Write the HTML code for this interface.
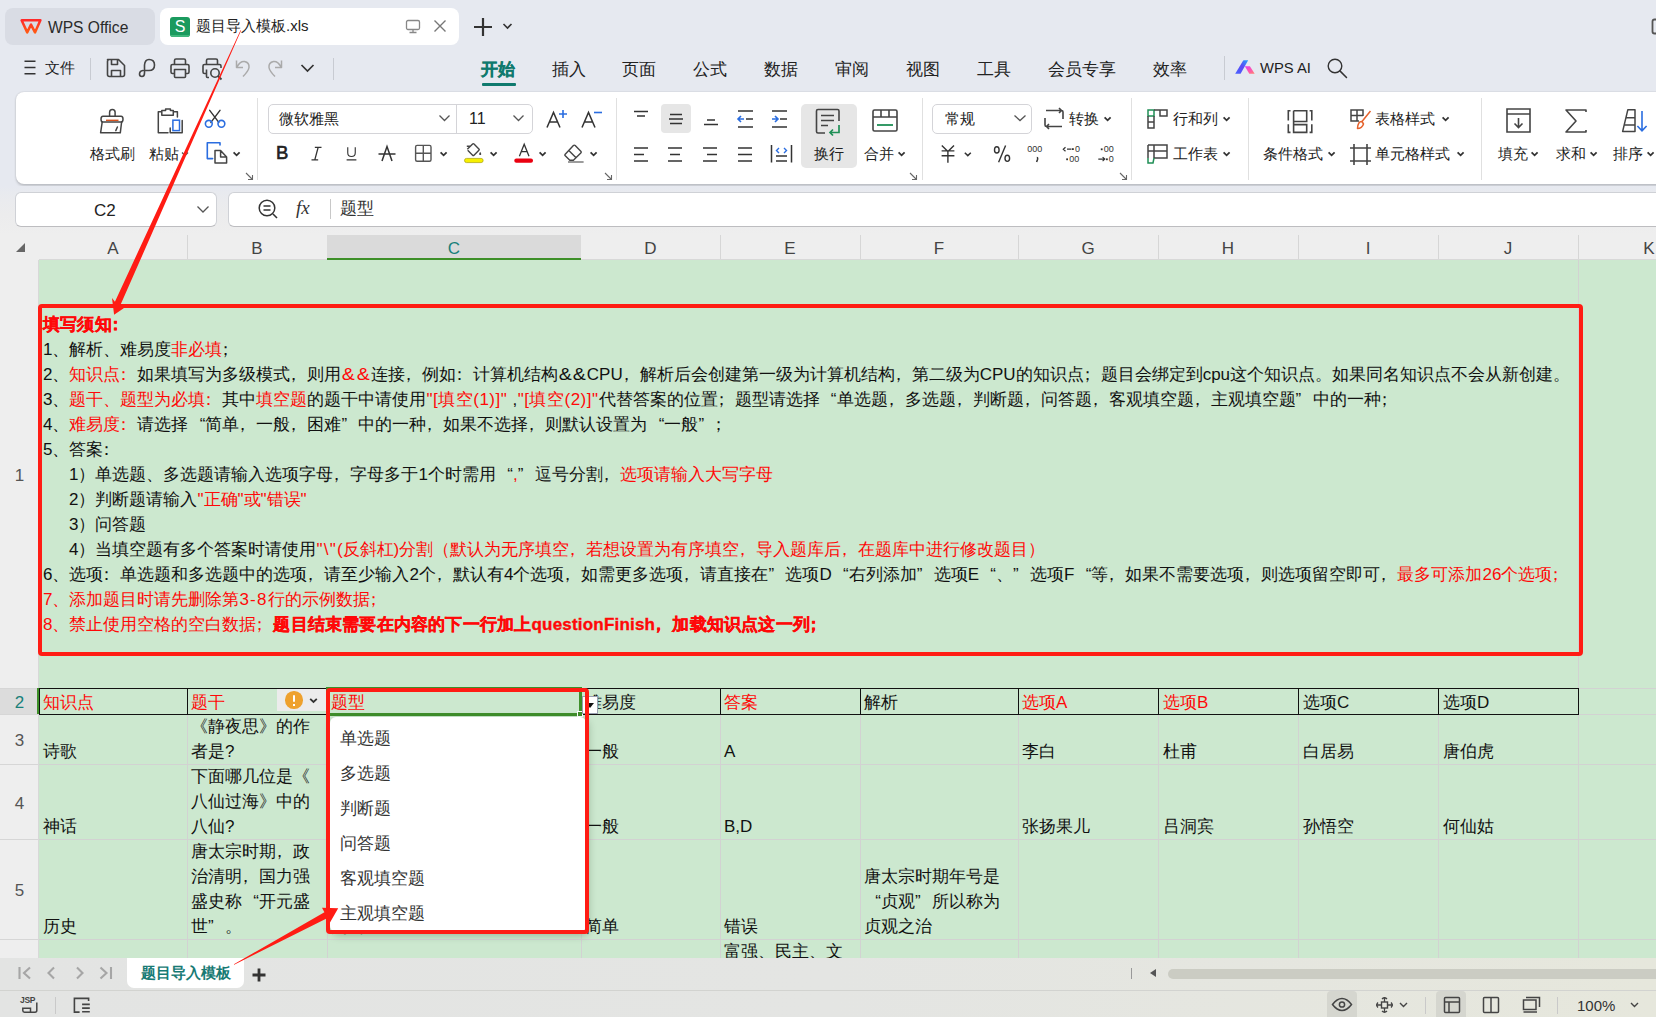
<!DOCTYPE html><html><head><meta charset="utf-8"><style>*{margin:0;padding:0;box-sizing:border-box}
html,body{width:1656px;height:1017px;overflow:hidden}
body{position:relative;background:#e6e9f0;font-family:"Liberation Sans",sans-serif;color:#222}
.a{position:absolute}
.t{position:absolute;white-space:nowrap}
#colhdr{left:0;top:235px;width:1656px;height:25px;background:#eeeeee;overflow:hidden}
#rowhdr{left:0;top:260px;width:39px;height:698px;background:#eeeeee}
#grid{left:39px;top:260px;width:1617px;height:698px;background:#cce8cf;overflow:hidden}
.ch{position:absolute;top:0;height:25px;line-height:27px;text-align:center;font-size:17px;color:#444}
.chs{position:absolute;top:0;width:1px;height:25px;background:#d6d6d6}
.rh{position:absolute;left:0;width:39px;text-align:center;font-size:17px;color:#555;padding-top:2px}
.rhs{position:absolute;left:0;width:39px;height:1px;background:#d6d6d6}
.vl{position:absolute;width:1px;background:#d2d2d2}
.hl{position:absolute;height:1px;background:#d2d2d2}
.c{position:absolute;white-space:nowrap;font-size:17px;line-height:25px;color:#111}
.r{color:#ff0808}
.ql{display:inline-block;width:1em;text-align:right}
.qr{display:inline-block;width:1em;text-align:left}
.pl{position:relative;left:-5px}
.amp{display:inline-block;width:14.6px;text-align:center;transform:scaleX(1.15)}
b{-webkit-text-stroke:0.35px #ff0808;letter-spacing:0.2px}
</style></head><body>
<!-- tab bar -->
<div class="a" style="left:5px;top:8px;width:150px;height:37px;background:#d9dce4;border-radius:8px"></div>
<svg class="a" style="left:0;top:0;overflow:visible" width="1" height="1"><defs><linearGradient id="wg" x1="0" y1="0" x2="0" y2="1"><stop offset="0" stop-color="#ff2a2a"/><stop offset="1" stop-color="#ff5a14"/></linearGradient></defs><path d="M21.6 20.3H40.4L35 32.4L31 24.6L27.2 32.4Z" fill="none" stroke="url(#wg)" stroke-width="2.5" stroke-linejoin="round"/></svg>
<div class="t" style="left:48px;top:18.5px;font-size:15.6px;line-height:18px;color:#2a2a2a">WPS Office</div>
<div class="a" style="left:160px;top:8px;width:299px;height:37px;background:#fff;border-radius:8px"></div>
<div class="a" style="left:170px;top:17px;width:20px;height:20px;background:#1a9a5e;border-radius:3px;overflow:hidden"><div class="a" style="left:0;bottom:0;width:20px;height:2px;background:#3fb67c"></div><div class="t" style="left:0;top:0;width:20px;text-align:center;font-size:16px;line-height:20px;color:#fff">S</div></div>
<div class="t" style="left:196px;top:16px;font-size:15px;line-height:20px;color:#222">题目导入模板.xls</div>
<svg class="a" style="left:405px;top:19px" width="16" height="15" viewBox="0 0 16 15"><rect x="1.5" y="1.5" width="13" height="9" rx="1.5" fill="none" stroke="#888" stroke-width="1.3"/><path d="M8 10.5V13.5M4.5 13.5H11.5" stroke="#888" stroke-width="1.3"/></svg>
<svg class="a" style="left:433px;top:19px" width="14" height="14" viewBox="0 0 14 14"><path d="M1.5 1.5L12.5 12.5M12.5 1.5L1.5 12.5" stroke="#777" stroke-width="1.4"/></svg>
<svg class="a" style="left:473px;top:17px" width="20" height="20" viewBox="0 0 20 20"><path d="M10 1V19M1 10H19" stroke="#333" stroke-width="2.2"/></svg>
<svg class="a" style="left:502px;top:22px" width="11" height="8" viewBox="0 0 11 8"><path d="M1.5 2L5.5 6L9.5 2" fill="none" stroke="#333" stroke-width="1.6"/></svg>
<svg class="a" style="left:1651px;top:18px" width="6" height="17" viewBox="0 0 6 17"><path d="M6 1.5H3.5Q1.5 1.5 1.5 3.5V13.5Q1.5 15.5 3.5 15.5H6" fill="none" stroke="#555" stroke-width="1.8"/></svg>
<!-- menu row -->
<svg class="a" style="left:24px;top:60px" width="12" height="15" viewBox="0 0 12 15"><path d="M0.5 1.2H11.5M0.5 7.5H11.5M0.5 13.8H11.5" stroke="#333" stroke-width="1.5"/></svg>
<div class="t" style="left:45px;top:58px;font-size:15px;line-height:20px;color:#222">文件</div>
<div class="a" style="left:90px;top:58px;width:1px;height:22px;background:#c8cbd2"></div>
<svg class="a" style="left:104px;top:57px" width="24" height="22" viewBox="0 0 24 22"><path d="M3.5 2.5H14.5L20.5 8.5V17.5Q20.5 19.5 18.5 19.5H5.5Q3.5 19.5 3.5 17.5V4.5Q3.5 2.5 5.5 2.5Z M7.5 2.5V7.5H13.5V2.5 M7.5 19.5V13.5H16.5V19.5" fill="none" stroke="#444" stroke-width="1.6" stroke-linejoin="round"/></svg>
<svg class="a" style="left:138px;top:57px" width="20" height="22" viewBox="0 0 20 22"><path d="M7 13.5H11Q16.5 13.5 16.5 8Q16.5 2.5 11 2.5Q7 2.5 6.5 8V16Q6.5 19.5 4 19.5Q1.5 19.5 1.5 17Q1.5 14 5 13.5" fill="none" stroke="#444" stroke-width="1.6" stroke-linecap="round"/></svg>
<svg class="a" style="left:169px;top:57px" width="22" height="22" viewBox="0 0 22 22"><path d="M5.5 7.5V3.5Q5.5 2 7 2H15Q16.5 2 16.5 3.5V7.5 M5.5 16.5H3.5Q2 16.5 2 15V9Q2 7.5 3.5 7.5H18.5Q20 7.5 20 9V15Q20 16.5 18.5 16.5H16.5 M5.5 12.5H16.5V19.5Q16.5 20.5 15.5 20.5H6.5Q5.5 20.5 5.5 19.5Z" fill="none" stroke="#444" stroke-width="1.6" stroke-linejoin="round"/></svg>
<svg class="a" style="left:201px;top:57px" width="24" height="24" viewBox="0 0 24 24"><path d="M5.5 7.5V3.5Q5.5 2 7 2H15Q16.5 2 16.5 3.5V7.5 M5.5 16.5H3.5Q2 16.5 2 15V9Q2 7.5 3.5 7.5H18.5Q20 7.5 20 9V11 M5.5 12.5V19.5Q5.5 20.5 6.5 20.5H8" fill="none" stroke="#444" stroke-width="1.6" stroke-linejoin="round"/><circle cx="14" cy="16" r="4.2" fill="none" stroke="#444" stroke-width="1.6"/><path d="M17 19L20.5 22.5" stroke="#444" stroke-width="1.8"/></svg>
<svg class="a" style="left:234px;top:58px" width="18" height="20" viewBox="0 0 18 20"><path d="M3 9Q6 3 10.5 3.5Q15.5 4.5 15 9.5Q14.5 13 9 18.5 M2.5 2.5V9.5H9" fill="none" stroke="#aaa" stroke-width="1.5" stroke-linejoin="round"/></svg>
<svg class="a" style="left:266px;top:58px" width="18" height="20" viewBox="0 0 18 20"><path d="M15 9Q12 3 7.5 3.5Q2.5 4.5 3 9.5Q3.5 13 9 18.5 M15.5 2.5V9.5H9" fill="none" stroke="#aaa" stroke-width="1.5" stroke-linejoin="round"/></svg>
<svg class="a" style="left:300px;top:63px" width="15" height="10" viewBox="0 0 15 10"><path d="M1.5 2L7.5 8L13.5 2" fill="none" stroke="#333" stroke-width="1.7"/></svg>
<div class="a" style="left:333px;top:58px;width:1px;height:22px;background:#c8cbd2"></div>
<div class="t" style="left:481px;top:60px;font-size:17px;line-height:20px;color:#0f7a6e;font-weight:bold;-webkit-text-stroke:0.3px #0f7a6e">开始</div>
<div class="a" style="left:482px;top:83px;width:34px;height:2.5px;border-radius:1px;background:#0f7a6e"></div>
<div class="t" style="left:552px;top:60px;font-size:17px;line-height:20px;color:#222">插入</div>
<div class="t" style="left:622px;top:60px;font-size:17px;line-height:20px;color:#222">页面</div>
<div class="t" style="left:693px;top:60px;font-size:17px;line-height:20px;color:#222">公式</div>
<div class="t" style="left:764px;top:60px;font-size:17px;line-height:20px;color:#222">数据</div>
<div class="t" style="left:835px;top:60px;font-size:17px;line-height:20px;color:#222">审阅</div>
<div class="t" style="left:906px;top:60px;font-size:17px;line-height:20px;color:#222">视图</div>
<div class="t" style="left:977px;top:60px;font-size:17px;line-height:20px;color:#222">工具</div>
<div class="t" style="left:1048px;top:60px;font-size:17px;line-height:20px;color:#222">会员专享</div>
<div class="t" style="left:1153px;top:60px;font-size:17px;line-height:20px;color:#222">效率</div>
<div class="a" style="left:1224px;top:56px;width:1px;height:24px;background:#c8cbd2"></div>
<svg class="a" style="left:0;top:0;overflow:visible" width="1" height="1"><defs><linearGradient id="aiL" x1="0" y1="1" x2="1" y2="0"><stop offset="0" stop-color="#4a63ff"/><stop offset="0.55" stop-color="#5a4af5"/><stop offset="1" stop-color="#22a8ff"/></linearGradient><linearGradient id="aiR" x1="0" y1="0" x2="1" y2="1"><stop offset="0" stop-color="#e23cf0"/><stop offset="0.6" stop-color="#ff5aa8"/><stop offset="1" stop-color="#ff8a6a"/></linearGradient></defs><path d="M1235.2 73.8L1243.2 60.6Q1243.6 60.2 1244.2 60.2H1248.2L1240.6 73.8Z" fill="url(#aiL)"/><path d="M1244.8 66.3H1249.9L1254.7 73.8H1249.3Z" fill="url(#aiR)"/></svg>
<div class="t" style="left:1260px;top:58.2px;font-size:14.8px;line-height:20px;color:#1e1e1e">WPS AI</div>
<svg class="a" style="left:1327px;top:58px" width="22" height="22" viewBox="0 0 22 22"><circle cx="8" cy="8" r="6.8" fill="none" stroke="#333" stroke-width="1.4"/><path d="M12.9 12.9L19.5 19.5" stroke="#333" stroke-width="1.5" stroke-linecap="round"/></svg>

<div class="a" style="left:16px;top:91.5px;width:1660px;height:92.3px;background:#fff;border-radius:8px;box-shadow:0 0 2px rgba(0,0,0,0.12),0 1.5px 2.5px rgba(0,0,0,0.16)"></div>
<!-- clipboard group -->
<svg class="a" style="left:0;top:0;overflow:visible" width="1" height="1">
<g fill="none" stroke="#444" stroke-width="1.5" stroke-linejoin="round" stroke-linecap="round">
<path d="M109.6 116.3V112.2A2.75 2.75 0 0 1 115.1 112.2V116.3"/>
<path d="M103 116.3H121Q123 116.3 123 119.15Q123 122 121 122H103Q101 122 101 119.15Q101 116.3 103 116.3Z"/>
<path d="M102.2 122L100.6 132.8H120.3L121.6 122"/>
<path d="M117.4 127L115.8 130.6"/>
<path d="M161.2 111.8H158.3V132.8H168"/>
<path d="M161.8 115.2V110.6H165.6V109H170.4V110.6H173.3V115.2Z"/>
<path d="M173.6 111.8H177.4V117"/>
<path d="M170.2 128V132.8H182.2V120.5"/>
<path d="M209.7 110.3L218.8 122.4M220 110.3L210.9 122.4" stroke="#333" stroke-width="1.4"/>
<path d="M220 145V142.8H207.3V158.6H212.6" stroke="#2a6de0" stroke-width="1.6"/>
<path d="M215 150.4H220.6L226.6 157V163H215Z M220.6 150.4V157H226.6"/>
</g>
<rect x="172.9" y="120.2" width="6.6" height="10.4" fill="none" stroke="#2a6de0" stroke-width="1.5"/>
<path d="M106 120.3H118.5" stroke="#d9531e" stroke-width="1.4"/>
<circle cx="208.8" cy="123.8" r="3.4" fill="none" stroke="#2a6de0" stroke-width="1.6"/>
<circle cx="221.4" cy="123.8" r="3.4" fill="none" stroke="#2a6de0" stroke-width="1.6"/>
</svg>
<div class="t" style="left:90px;top:144px;font-size:15px;line-height:20px;color:#222">格式刷</div>
<div class="t" style="left:149px;top:144px;font-size:15px;line-height:20px;color:#222">粘贴</div>
<svg class="a" style="left:181px;top:151px" width="8" height="6" viewBox="0 0 8 6"><path d="M1 1.5L4 4.5L7 1.5" fill="none" stroke="#555" stroke-width="1.3"/></svg>
<svg class="a" style="left:232px;top:151px" width="9" height="6" viewBox="0 0 9 6"><path d="M1.6 1.4L4.6 4.3L7.6 1.4" fill="none" stroke="#333" stroke-width="1.8"/></svg>
<svg class="a" style="left:245px;top:172px" width="9" height="9" viewBox="0 0 9 9"><path d="M1 1L7.5 7.5M7.5 3V7.5H3" fill="none" stroke="#666" stroke-width="1.1"/></svg>
<div class="a" style="left:257px;top:98px;width:1px;height:82px;background:#e0e0e0"></div>
<!-- font group -->
<div class="a" style="left:268px;top:104px;width:265px;height:30px;border:1px solid #d4d4d8;border-radius:5px"></div>
<div class="a" style="left:456px;top:105px;width:1px;height:28px;background:#d4d4d8"></div>
<div class="t" style="left:279px;top:109px;font-size:15px;line-height:20px;color:#222">微软雅黑</div>
<svg class="a" style="left:438px;top:114px" width="13" height="8" viewBox="0 0 13 8"><path d="M1.5 1.5L6.5 6.5L11.5 1.5" fill="none" stroke="#555" stroke-width="1.3"/></svg>
<div class="t" style="left:469px;top:109px;font-size:16px;line-height:20px;color:#222">11</div>
<svg class="a" style="left:512px;top:114px" width="13" height="8" viewBox="0 0 13 8"><path d="M1.5 1.5L6.5 6.5L11.5 1.5" fill="none" stroke="#555" stroke-width="1.3"/></svg>
<svg class="a" style="left:545px;top:108px" width="24" height="22" viewBox="0 0 24 22"><path d="M2 19.5L8.5 4.5L15 19.5M4.5 14H12.5" fill="none" stroke="#333" stroke-width="1.5"/><path d="M18 2V10M14 6H22" stroke="#2a6de0" stroke-width="1.6"/></svg>
<svg class="a" style="left:580px;top:108px" width="24" height="22" viewBox="0 0 24 22"><path d="M2 19.5L8.5 4.5L15 19.5M4.5 14H12.5" fill="none" stroke="#333" stroke-width="1.5"/><path d="M14 4.5H22" stroke="#2a6de0" stroke-width="1.6"/></svg>
<div class="t" style="left:276px;top:142px;font-size:18.5px;line-height:22px;color:#222;-webkit-text-stroke:0.6px #222">B</div>
<svg class="a" style="left:309px;top:146px" width="15" height="15" viewBox="0 0 16 18"><path d="M6 1.5H14M2 16.5H10M10 1.5L6 16.5" fill="none" stroke="#333" stroke-width="1.5"/></svg>
<svg class="a" style="left:344px;top:146px" width="15" height="15" viewBox="0 0 17 20"><path d="M3.5 1.5V9Q3.5 14 8.5 14Q13.5 14 13.5 9V1.5M2 18.5H15" fill="none" stroke="#333" stroke-width="1.5"/></svg>
<svg class="a" style="left:377px;top:144px" width="20" height="20" viewBox="0 0 20 20"><path d="M5 17L10 2.5L15 17M1.5 10H18.5" fill="none" stroke="#333" stroke-width="1.5"/></svg>

<svg class="a" style="left:0;top:0;overflow:visible" width="1" height="1">
<rect x="415.6" y="145.4" width="15.4" height="15.8" rx="1.5" fill="none" stroke="#555" stroke-width="1.4"/>
<path d="M423.3 145.4V161.2M415.6 153.3H431" stroke="#555" stroke-width="1.4"/>
<path d="M467.3 149.3L472.6 144Q473.3 143.3 474 144L478.9 148.9Q479.6 149.6 478.9 150.3L474 155.2Q473.3 155.9 472.6 155.2L467.7 150.3 M466.8 146.2H470.2" fill="none" stroke="#444" stroke-width="1.4" stroke-linejoin="round"/>
<path d="M480.2 151.8Q481.6 153.8 481.2 154.6Q480.2 155.6 479.2 154.6Q478.8 153.8 480.2 151.8Z" fill="#444"/>
<rect x="464.5" y="158.4" width="18.6" height="4.2" rx="2" fill="#f7f000" stroke="#a89f00" stroke-width="0.7"/>
<path d="M519.4 156.3L524.2 144.3L529 156.3M521.2 151.6H527.2" fill="none" stroke="#333" stroke-width="1.3"/>
<rect x="514.3" y="158.4" width="18.7" height="4.4" rx="2" fill="#ea0010"/>
<path d="M565 154.6L573.4 145.6Q574.3 144.7 575.2 145.6L580.8 151.2Q581.7 152.1 580.8 153L573.4 160.2H569.8L565 155.4Q564.6 155 565 154.6Z M568.8 150.6L575.8 157.6" fill="none" stroke="#444" stroke-width="1.4" stroke-linejoin="round"/>
<path d="M568 162H583.6" stroke="#666" stroke-width="1.3"/>
</svg>
<svg class="a" style="left:439px;top:151px" width="9" height="6" viewBox="0 0 9 6"><path d="M1.6 1.4L4.6 4.3L7.6 1.4" fill="none" stroke="#333" stroke-width="1.8"/></svg>

<svg class="a" style="left:489px;top:151px" width="9" height="6" viewBox="0 0 9 6"><path d="M1.6 1.4L4.6 4.3L7.6 1.4" fill="none" stroke="#333" stroke-width="1.8"/></svg>

<svg class="a" style="left:538px;top:151px" width="9" height="6" viewBox="0 0 9 6"><path d="M1.6 1.4L4.6 4.3L7.6 1.4" fill="none" stroke="#333" stroke-width="1.8"/></svg>

<svg class="a" style="left:589px;top:151px" width="9" height="6" viewBox="0 0 9 6"><path d="M1.6 1.4L4.6 4.3L7.6 1.4" fill="none" stroke="#333" stroke-width="1.8"/></svg>
<svg class="a" style="left:604px;top:172px" width="9" height="9" viewBox="0 0 9 9"><path d="M1 1L7.5 7.5M7.5 3V7.5H3" fill="none" stroke="#666" stroke-width="1.1"/></svg>
<div class="a" style="left:616px;top:98px;width:1px;height:82px;background:#e0e0e0"></div>
<!-- alignment group -->
<svg class="a" style="left:632px;top:108px" width="18" height="14" viewBox="0 0 18 14"><path d="M2 3.5H16M5 8H13" stroke="#333" stroke-width="1.6"/></svg>
<div class="a" style="left:661px;top:104px;width:30px;height:29px;background:#e6e6e6;border-radius:4px"></div>
<svg class="a" style="left:667px;top:111px" width="18" height="16" viewBox="0 0 18 16"><path d="M3 3.5H15M2 8H16M3 12.5H15" stroke="#333" stroke-width="1.6"/></svg>
<svg class="a" style="left:702px;top:113px" width="18" height="14" viewBox="0 0 18 14"><path d="M5 7H13M2 11.5H16" stroke="#333" stroke-width="1.6"/></svg>
<svg class="a" style="left:736px;top:109px" width="19" height="20" viewBox="0 0 19 20"><path d="M2 2H17M10 10H17M2 18H17" stroke="#333" stroke-width="1.6"/><path d="M8 10H2M5 7L2 10L5 13" fill="none" stroke="#2a6de0" stroke-width="1.6"/></svg>
<svg class="a" style="left:770px;top:109px" width="19" height="20" viewBox="0 0 19 20"><path d="M2 2H17M10 10H17M2 18H17" stroke="#333" stroke-width="1.6"/><path d="M2 10H8M5 7L8 10L5 13" fill="none" stroke="#2a6de0" stroke-width="1.6"/></svg>
<svg class="a" style="left:632px;top:146px" width="18" height="17" viewBox="0 0 18 17"><path d="M2 2H16M2 8.5H12M2 15H16" stroke="#333" stroke-width="1.6"/></svg>
<svg class="a" style="left:666px;top:146px" width="18" height="17" viewBox="0 0 18 17"><path d="M2 2H16M4 8.5H14M2 15H16" stroke="#333" stroke-width="1.6"/></svg>
<svg class="a" style="left:701px;top:146px" width="18" height="17" viewBox="0 0 18 17"><path d="M2 2H16M6 8.5H16M2 15H16" stroke="#333" stroke-width="1.6"/></svg>
<svg class="a" style="left:736px;top:146px" width="18" height="17" viewBox="0 0 18 17"><path d="M2 2H16M2 8.5H16M2 15H16" stroke="#333" stroke-width="1.6"/></svg>
<svg class="a" style="left:770px;top:143px" width="23" height="21" viewBox="0 0 23 21"><path d="M1.5 2V19.5M21.5 2V19.5M6 13H17M6 18H17" stroke="#333" stroke-width="1.5"/><path d="M9 5L6.5 7.5L9 10M14 5L16.5 7.5L14 10" fill="none" stroke="#2a6de0" stroke-width="1.4"/></svg>
<div class="a" style="left:801px;top:104px;width:56px;height:64px;background:#e6e6e6;border-radius:5px"></div>
<svg class="a" style="left:814px;top:107px" width="30" height="30" viewBox="0 0 30 30"><path d="M25 14V4Q25 2.5 23.5 2.5H4Q2.5 2.5 2.5 4V24.5Q2.5 26 4 26H11" fill="none" stroke="#444" stroke-width="1.6"/><path d="M7 8.5H20M7 13.5H20M7 18.5H14" stroke="#444" stroke-width="1.6"/><path d="M25 18V25.5H16M19 22.5L16 25.5L19 28.5" fill="none" stroke="#1f8f56" stroke-width="1.7"/></svg>
<div class="t" style="left:814px;top:144px;font-size:15px;line-height:20px;color:#222">换行</div>
<svg class="a" style="left:871px;top:108px" width="28" height="25" viewBox="0 0 28 25"><rect x="2" y="2" width="24" height="21" rx="1.5" fill="none" stroke="#444" stroke-width="1.6"/><path d="M2 9H26M10 2V9M18 2V9" stroke="#444" stroke-width="1.6"/><path d="M6 17H22" stroke="#1f8f56" stroke-width="1.8"/></svg>
<div class="t" style="left:864px;top:144px;font-size:15px;line-height:20px;color:#222">合并</div>
<svg class="a" style="left:897px;top:151px" width="9" height="6" viewBox="0 0 9 6"><path d="M1.6 1.4L4.6 4.3L7.6 1.4" fill="none" stroke="#333" stroke-width="1.8"/></svg>
<svg class="a" style="left:909px;top:172px" width="9" height="9" viewBox="0 0 9 9"><path d="M1 1L7.5 7.5M7.5 3V7.5H3" fill="none" stroke="#666" stroke-width="1.1"/></svg>
<div class="a" style="left:922px;top:98px;width:1px;height:82px;background:#e0e0e0"></div>
<!-- number group -->
<div class="a" style="left:932px;top:104px;width:100px;height:30px;border:1px solid #d4d4d8;border-radius:5px"></div>
<div class="t" style="left:945px;top:109px;font-size:15px;line-height:20px;color:#222">常规</div>
<svg class="a" style="left:1013px;top:114px" width="14" height="8" viewBox="0 0 14 8"><path d="M1.5 1.5L7 6.5L12.5 1.5" fill="none" stroke="#555" stroke-width="1.3"/></svg>
<svg class="a" style="left:1042px;top:107px" width="24" height="23" viewBox="0 0 24 23"><path d="M4 3.5H19.5Q21 3.5 21 5V12M20 19.5H4.5Q3 19.5 3 18V11 M17 1L19.5 3.5L17 6 M7 17L4.5 19.5L7 22" fill="none" stroke="#444" stroke-width="1.6"/></svg>
<div class="t" style="left:1069px;top:109px;font-size:15px;line-height:20px;color:#222">转换</div>
<svg class="a" style="left:1103px;top:116px" width="9" height="6" viewBox="0 0 9 6"><path d="M1.6 1.4L4.6 4.3L7.6 1.4" fill="none" stroke="#333" stroke-width="1.8"/></svg>
<svg class="a" style="left:0;top:0;overflow:visible" width="1" height="1">
<g fill="none" stroke="#333" stroke-width="1.4">
<path d="M941.8 145.5L947.9 151.6L954 145.5M947.9 151.6V162.8M941.6 150.9H954.4M941.6 155.8H954.4"/>
<path d="M964.8 152.8L967.8 155.6L970.8 152.8" stroke-width="1.5"/>
<ellipse cx="996.8" cy="149.9" rx="2.3" ry="3.1"/><ellipse cx="1007.3" cy="158.3" rx="2.3" ry="3.1"/>
<path d="M1005.6 145.5L998.6 162.2"/>
<path d="M1067 149.2H1071.5M1065.5 147.2L1063.3 149.2L1065.5 151.2" stroke-width="1.2"/>
<path d="M1098.3 159.1H1104.5M1102.6 157.1L1104.8 159.1L1102.6 161.1" stroke-width="1.2"/>
</g>
<g fill="#333" font-family="Liberation Sans, sans-serif" font-size="9px">
<text x="1027.3" y="152.4">000</text>
<text x="1074.9" y="152.4">0</text><rect x="1072" y="148.2" width="1.8" height="1.8"/>
<text x="1069.2" y="162.4">00</text><rect x="1066.2" y="158.4" width="1.8" height="1.8"/>
<text x="1103.7" y="152.4">00</text><rect x="1100.8" y="148.4" width="1.8" height="1.8"/>
<text x="1108.8" y="162.4">0</text><rect x="1106" y="158.4" width="1.8" height="1.8"/>
</g>
<path d="M1036.8 157.5Q1037.9 157.5 1037.6 159.2L1036.6 162" fill="none" stroke="#333" stroke-width="1.5"/>
</svg>
<svg class="a" style="left:1119px;top:172px" width="9" height="9" viewBox="0 0 9 9"><path d="M1 1L7.5 7.5M7.5 3V7.5H3" fill="none" stroke="#666" stroke-width="1.1"/></svg>
<div class="a" style="left:1131px;top:98px;width:1px;height:82px;background:#e0e0e0"></div>
<!-- rows/cols group -->
<svg class="a" style="left:1146px;top:108px" width="23" height="22" viewBox="0 0 23 22"><rect x="2" y="2" width="6" height="6" fill="none" stroke="#1f8f56" stroke-width="1.5"/><path d="M8 8V20H2V8 M8 2H21V8H14V2 M2 14H8" fill="none" stroke="#444" stroke-width="1.5"/></svg>
<div class="t" style="left:1173px;top:109px;font-size:15px;line-height:20px;color:#222">行和列</div>
<svg class="a" style="left:1222px;top:116px" width="9" height="6" viewBox="0 0 9 6"><path d="M1.6 1.4L4.6 4.3L7.6 1.4" fill="none" stroke="#333" stroke-width="1.8"/></svg>
<svg class="a" style="left:1146px;top:143px" width="23" height="22" viewBox="0 0 23 22"><path d="M2 2H21V15H8 M2 2V15 M2 8H21 M8 2V15" fill="none" stroke="#444" stroke-width="1.5"/><path d="M2 15V20H7L8 15" fill="none" stroke="#1f8f56" stroke-width="1.5"/></svg>
<div class="t" style="left:1173px;top:144px;font-size:15px;line-height:20px;color:#222">工作表</div>
<svg class="a" style="left:1222px;top:151px" width="9" height="6" viewBox="0 0 9 6"><path d="M1.6 1.4L4.6 4.3L7.6 1.4" fill="none" stroke="#333" stroke-width="1.8"/></svg>
<div class="a" style="left:1248px;top:98px;width:1px;height:82px;background:#e0e0e0"></div>
<!-- styles group -->
<svg class="a" style="left:0;top:0;overflow:visible" width="1" height="1"><g fill="none" stroke="#444" stroke-width="1.6"><path d="M1290.5 110.8H1288.3V120.6M1288.3 124.2V132.4H1290.5M1309.6 110.8H1311.8V120.6M1311.8 124.2V132.4H1309.6"/><path d="M1293.6 110.8H1306.7V121.5H1293.6M1293.6 110.8V132.4H1306.7V124.6H1293.6"/></g></svg>
<div class="t" style="left:1263px;top:144px;font-size:15px;line-height:20px;color:#222">条件格式</div>
<svg class="a" style="left:1327px;top:151px" width="9" height="6" viewBox="0 0 9 6"><path d="M1.6 1.4L4.6 4.3L7.6 1.4" fill="none" stroke="#333" stroke-width="1.8"/></svg>
<svg class="a" style="left:1349px;top:108px" width="24" height="22" viewBox="0 0 24 22"><path d="M10 13H2V2H14V8 M2 7.5H14 M8 2V13" fill="none" stroke="#444" stroke-width="1.5"/><path d="M21.5 3L13 13.5M13 13.5Q9 13 8.5 20.5Q13 20.5 14.5 16Z" fill="none" stroke="#e5622d" stroke-width="1.5" stroke-linejoin="round"/></svg>
<div class="t" style="left:1375px;top:109px;font-size:15px;line-height:20px;color:#222">表格样式</div>
<svg class="a" style="left:1441px;top:116px" width="9" height="6" viewBox="0 0 9 6"><path d="M1.6 1.4L4.6 4.3L7.6 1.4" fill="none" stroke="#333" stroke-width="1.8"/></svg>
<svg class="a" style="left:1349px;top:143px" width="23" height="23" viewBox="0 0 23 23"><path d="M5 1V22M18 1V22M1 5H22M1 18H22" fill="none" stroke="#444" stroke-width="1.6"/></svg>
<div class="t" style="left:1375px;top:144px;font-size:15px;line-height:20px;color:#222">单元格样式</div>
<svg class="a" style="left:1456px;top:151px" width="9" height="6" viewBox="0 0 9 6"><path d="M1.6 1.4L4.6 4.3L7.6 1.4" fill="none" stroke="#333" stroke-width="1.8"/></svg>
<div class="a" style="left:1481px;top:98px;width:1px;height:82px;background:#e0e0e0"></div>
<!-- editing group -->
<svg class="a" style="left:1505px;top:107px" width="27" height="27" viewBox="0 0 27 27"><path d="M2 7H25 M2 2H25V25H2Z M13.5 11V20M9.5 16.5L13.5 20.5L17.5 16.5" fill="none" stroke="#444" stroke-width="1.6"/></svg>
<div class="t" style="left:1498px;top:144px;font-size:15px;line-height:20px;color:#222">填充</div>
<svg class="a" style="left:1530px;top:151px" width="9" height="6" viewBox="0 0 9 6"><path d="M1.6 1.4L4.6 4.3L7.6 1.4" fill="none" stroke="#333" stroke-width="1.8"/></svg>
<svg class="a" style="left:1563px;top:108px" width="26" height="26" viewBox="0 0 26 26"><path d="M23 4V2H3L13 13L3 24H23V22" fill="none" stroke="#444" stroke-width="1.6" stroke-linejoin="round"/></svg>
<div class="t" style="left:1556px;top:144px;font-size:15px;line-height:20px;color:#222">求和</div>
<svg class="a" style="left:1589px;top:151px" width="9" height="6" viewBox="0 0 9 6"><path d="M1.6 1.4L4.6 4.3L7.6 1.4" fill="none" stroke="#333" stroke-width="1.8"/></svg>
<svg class="a" style="left:0;top:0;overflow:visible" width="1" height="1"><path d="M1627.8 109.8H1635V131.6H1622.6Z M1626 117.7H1635M1624.3 125H1635" fill="none" stroke="#444" stroke-width="1.5" stroke-linejoin="round"/><path d="M1642 111V130.6M1637.4 126L1642 130.8L1646.6 126" fill="none" stroke="#2a6de0" stroke-width="1.6"/></svg>
<div class="t" style="left:1613px;top:144px;font-size:15px;line-height:20px;color:#222">排序</div>
<svg class="a" style="left:1646px;top:151px" width="9" height="6" viewBox="0 0 9 6"><path d="M1.6 1.4L4.6 4.3L7.6 1.4" fill="none" stroke="#333" stroke-width="1.8"/></svg>

<div class="a" style="left:0;top:186px;width:1656px;height:49px;background:linear-gradient(#e6e9f0 0%,#e8eaef 12%,#eaebee 30%,#ececed 60%,#eeeeee 100%)"></div>
<div class="a" style="left:15px;top:192px;width:202px;height:34.5px;background:#fff;border:1px solid #cfd1d6;border-bottom-color:#bdbdc0;border-radius:6px"></div>
<div class="t" style="left:94px;top:201px;font-size:17px;line-height:20px;color:#222">C2</div>
<svg class="a" style="left:196px;top:205px" width="14" height="9" viewBox="0 0 14 9"><path d="M1.5 1.5L7 7L12.5 1.5" fill="none" stroke="#555" stroke-width="1.3"/></svg>
<div class="a" style="left:228px;top:192px;width:1440px;height:34.5px;background:#fff;border:1px solid #cfd1d6;border-bottom-color:#bdbdc0;border-radius:6px"></div>
<svg class="a" style="left:257px;top:198px" width="22" height="22" viewBox="0 0 22 22"><circle cx="10" cy="10" r="7.8" fill="none" stroke="#333" stroke-width="1.5"/><path d="M16 16L20 20" stroke="#333" stroke-width="1.6"/><path d="M6.5 8H13.5M6.5 12H13.5" stroke="#333" stroke-width="1.5"/></svg>
<div class="t" style="left:296px;top:196px;font-size:19px;line-height:24px;color:#333;font-family:'Liberation Serif',serif;font-style:italic">fx</div>
<div class="a" style="left:330px;top:199px;width:1px;height:20px;background:#c8c8c8"></div>
<div class="t" style="left:340px;top:199px;font-size:17px;line-height:20px;color:#333">题型</div>

<div class="a" id="colhdr">
<div class="ch" style="left:39px;width:148px;">A</div>
<div class="ch" style="left:187px;width:140px;">B</div>
<div class="ch" style="left:327px;width:254px;background:#dadada;color:#18807a;">C</div>
<div class="ch" style="left:581px;width:139px;">D</div>
<div class="ch" style="left:720px;width:140px;">E</div>
<div class="ch" style="left:860px;width:158px;">F</div>
<div class="ch" style="left:1018px;width:140px;">G</div>
<div class="ch" style="left:1158px;width:140px;">H</div>
<div class="ch" style="left:1298px;width:140px;">I</div>
<div class="ch" style="left:1438px;width:140px;">J</div>
<div class="ch" style="left:1578px;width:142px;">K</div>
<div class="chs" style="left:187px"></div>
<div class="chs" style="left:720px"></div>
<div class="chs" style="left:860px"></div>
<div class="chs" style="left:1018px"></div>
<div class="chs" style="left:1158px"></div>
<div class="chs" style="left:1298px"></div>
<div class="chs" style="left:1438px"></div>
<div class="chs" style="left:1578px"></div>
<div class="a" style="left:39px;top:24px;width:1617px;height:1px;background:#d8d8d8"></div>
<div class="a" style="left:327px;top:23px;width:254px;height:2px;background:#3d8f28"></div>
<div class="a" style="left:16px;top:8px;width:0;height:0;border-left:9px solid transparent;border-bottom:9px solid #666"></div>
</div>
<div class="a" id="rowhdr">
<div class="rh" style="top:0px;height:428px;line-height:428px;">1</div>
<div class="rh" style="top:428px;height:26px;line-height:26px;background:#dcdcdc;color:#18807a;">2</div>
<div class="rh" style="top:454px;height:50px;line-height:50px;">3</div>
<div class="rh" style="top:504px;height:75px;line-height:75px;">4</div>
<div class="rh" style="top:579px;height:100px;line-height:100px;">5</div>
<div class="rhs" style="top:428px"></div>
<div class="rhs" style="top:454px"></div>
<div class="rhs" style="top:504px"></div>
<div class="rhs" style="top:579px"></div>
<div class="rhs" style="top:679px"></div>
<div class="a" style="left:38px;top:0;width:1px;height:698px;background:#d8d8d8"></div>
<div class="a" style="left:37px;top:428px;width:3px;height:26px;background:#3d8f28"></div>
</div>
<div class="a" id="grid">
<div class="vl" style="left:148px;top:454px;height:250px"></div>
<div class="vl" style="left:288px;top:454px;height:250px"></div>
<div class="vl" style="left:542px;top:454px;height:250px"></div>
<div class="vl" style="left:681px;top:454px;height:250px"></div>
<div class="vl" style="left:821px;top:454px;height:250px"></div>
<div class="vl" style="left:979px;top:454px;height:250px"></div>
<div class="vl" style="left:1119px;top:454px;height:250px"></div>
<div class="vl" style="left:1259px;top:454px;height:250px"></div>
<div class="vl" style="left:1399px;top:454px;height:250px"></div>
<div class="vl" style="left:1539px;top:454px;height:250px"></div>
<div class="vl" style="left:1539px;top:0px;height:454px"></div>
<div class="hl" style="top:454px;width:1617px"></div>
<div class="hl" style="top:504px;width:1617px"></div>
<div class="hl" style="top:579px;width:1617px"></div>
<div class="hl" style="top:679px;width:1617px"></div>
<div class="hl" style="top:428px;left:1539px;width:80px"></div>
<div class="hl" style="top:454px;left:1539px;width:80px"></div>
<div class="a" style="left:0;top:428px;width:1540px;height:27px;border:1px solid #111"></div>
<div class="a" style="left:148px;top:428px;width:1px;height:26px;background:#111"></div>
<div class="a" style="left:288px;top:428px;width:1px;height:26px;background:#111"></div>
<div class="a" style="left:542px;top:428px;width:1px;height:26px;background:#111"></div>
<div class="a" style="left:681px;top:428px;width:1px;height:26px;background:#111"></div>
<div class="a" style="left:821px;top:428px;width:1px;height:26px;background:#111"></div>
<div class="a" style="left:979px;top:428px;width:1px;height:26px;background:#111"></div>
<div class="a" style="left:1119px;top:428px;width:1px;height:26px;background:#111"></div>
<div class="a" style="left:1259px;top:428px;width:1px;height:26px;background:#111"></div>
<div class="a" style="left:1399px;top:428px;width:1px;height:26px;background:#111"></div>
<div class="c" style="left:4px;top:52px;"><b class="r">填写须知<span class="pl">：</span></b></div>
<div class="c" style="left:4px;top:77px;">1、解析、难易度<span class="r">非必填</span><span class="pl">；</span></div>
<div class="c" style="left:4px;top:102px;">2、<span class="r">知识点<span class="pl">：</span></span>如果填写为多级模式<span class="pl">，</span>则用<span class="r"><span class="amp">&amp;</span><span class="amp">&amp;</span></span>连接<span class="pl">，</span>例如<span class="pl">：</span>计算机结构<span class="amp">&amp;</span><span class="amp">&amp;</span>CPU<span class="pl">，</span>解析后会创建第一级为计算机结构<span class="pl">，</span>第二级为CPU的知识点<span class="pl">；</span>题目会绑定到cpu这个知识点。如果同名知识点不会从新创建。</div>
<div class="c" style="left:4px;top:127px;">3、<span class="r">题干、题型为必填<span class="pl">：</span></span>其中<span class="r">填空题</span>的题干中请使用<span style="letter-spacing:0.5px"><span class="r">"[填空(1)]"</span> ,<span class="r">"[填空(2)]"</span></span>代替答案的位置<span class="pl">；</span>题型请选择<span class="ql">“</span>单选题<span class="pl">，</span>多选题<span class="pl">，</span>判断题<span class="pl">，</span>问答题<span class="pl">，</span>客观填空题<span class="pl">，</span>主观填空题<span class="qr">”</span>中的一种<span class="pl">；</span></div>
<div class="c" style="left:4px;top:152px;">4、<span class="r">难易度<span class="pl">：</span></span>请选择<span class="ql">“</span>简单<span class="pl">，</span>一般<span class="pl">，</span>困难<span class="qr">”</span>中的一种<span class="pl">，</span>如果不选择<span class="pl">，</span>则默认设置为<span class="ql">“</span>一般<span class="qr">”</span><span class="pl">；</span></div>
<div class="c" style="left:4px;top:177px;">5、答案<span class="pl">：</span></div>
<div class="c" style="left:30px;top:202px;">1）单选题、多选题请输入选项字母<span class="pl">，</span>字母多于1个时需用<span class="ql">“</span><span class="r">,</span><span class="qr">”</span>逗号分割<span class="pl">，</span><span class="r">选项请输入大写字母</span></div>
<div class="c" style="left:30px;top:227px;">2）判断题请输入<span class="r">"正确"或"错误"</span></div>
<div class="c" style="left:30px;top:252px;">3）问答题</div>
<div class="c" style="left:30px;top:277px;">4）当填空题有多个答案时请使用<span class="r"><span style="letter-spacing:1.2px">"\"</span>(反斜杠)分割（默认为无序填空<span class="pl">，</span>若想设置为有序填空<span class="pl">，</span>导入题库后<span class="pl">，</span>在题库中进行修改题目）</span></div>
<div class="c" style="left:4px;top:302px;">6、选项<span class="pl">：</span>单选题和多选题中的选项<span class="pl">，</span>请至少输入2个<span class="pl">，</span>默认有4个选项<span class="pl">，</span>如需更多选项<span class="pl">，</span>请直接在<span class="qr">”</span>选项D<span class="ql">“</span>右列添加<span class="qr">”</span>选项E<span class="ql">“</span>、<span class="qr">”</span>选项F<span class="ql">“</span>等<span class="pl">，</span>如果不需要选项<span class="pl">，</span>则选项留空即可<span class="pl">，</span><span class="r">最多可添加26个选项<span class="pl">；</span></span></div>
<div class="c" style="left:4px;top:327px;"><span class="r">7、添加题目时请先删除第<span style="letter-spacing:1.2px">3-8</span>行的示例数据<span class="pl">；</span></span></div>
<div class="c" style="left:4px;top:352px;"><span class="r">8、禁止使用空格的空白数据<span class="pl">；</span><b>题目结束需要在内容的下一行加上questionFinish<span class="pl">，</span>加载知识点这一列<span class="pl">；</span></b></span></div>
<div class="c" style="left:4px;top:429.5px;"><span class="r">知识点</span></div>
<div class="c" style="left:152px;top:429.5px;"><span class="r">题干</span></div>
<div class="c" style="left:292px;top:429.5px;"><span class="r">题型</span></div>
<div class="c" style="left:546px;top:429.5px;">难易度</div>
<div class="c" style="left:685px;top:429.5px;"><span class="r">答案</span></div>
<div class="c" style="left:825px;top:429.5px;">解析</div>
<div class="c" style="left:983px;top:429.5px;"><span class="r">选项A</span></div>
<div class="c" style="left:1124px;top:429.5px;"><span class="r">选项B</span></div>
<div class="c" style="left:1264px;top:429.5px;">选项C</div>
<div class="c" style="left:1404px;top:429.5px;">选项D</div>
<div class="c" style="left:4px;top:479px;">诗歌</div>
<div class="c" style="left:152px;top:454px;">《静夜思》的作</div>
<div class="c" style="left:152px;top:479px;">者是?</div>
<div class="c" style="left:292px;top:479px;">单选题</div>
<div class="c" style="left:546px;top:479px;">一般</div>
<div class="c" style="left:685px;top:479px;">A</div>
<div class="c" style="left:983px;top:479px;">李白</div>
<div class="c" style="left:1124px;top:479px;">杜甫</div>
<div class="c" style="left:1264px;top:479px;">白居易</div>
<div class="c" style="left:1404px;top:479px;">唐伯虎</div>
<div class="c" style="left:4px;top:554px;">神话</div>
<div class="c" style="left:152px;top:504px;">下面哪几位是《</div>
<div class="c" style="left:152px;top:529px;">八仙过海》中的</div>
<div class="c" style="left:152px;top:554px;">八仙?</div>
<div class="c" style="left:292px;top:554px;">多选题</div>
<div class="c" style="left:546px;top:554px;">一般</div>
<div class="c" style="left:685px;top:554px;">B,D</div>
<div class="c" style="left:983px;top:554px;">张扬果儿</div>
<div class="c" style="left:1124px;top:554px;">吕洞宾</div>
<div class="c" style="left:1264px;top:554px;">孙悟空</div>
<div class="c" style="left:1404px;top:554px;">何仙姑</div>
<div class="c" style="left:4px;top:654px;">历史</div>
<div class="c" style="left:152px;top:579px;">唐太宗时期<span class="pl">，</span>政</div>
<div class="c" style="left:152px;top:604px;">治清明<span class="pl">，</span>国力强</div>
<div class="c" style="left:152px;top:629px;">盛史称<span class="ql">“</span>开元盛</div>
<div class="c" style="left:152px;top:654px;">世<span class="qr">”</span>。</div>
<div class="c" style="left:292px;top:654px;">判断题</div>
<div class="c" style="left:546px;top:654px;">简单</div>
<div class="c" style="left:685px;top:654px;">错误</div>
<div class="c" style="left:825px;top:604px;">唐太宗时期年号是</div>
<div class="c" style="left:825px;top:629px;"><span class="ql">“</span>贞观<span class="qr">”</span>所以称为</div>
<div class="c" style="left:825px;top:654px;">贞观之治</div>
<div class="c" style="left:685px;top:679px;">富强、民主、文</div>
</div>
<!-- warning icon B2 -->
<div class="a" style="left:277px;top:689.3px;width:49px;height:21.3px;background:#ececec"></div>
<div class="a" style="left:285.3px;top:691.3px;width:17.4px;height:17.4px;border-radius:50%;background:#eea12e"></div>
<div class="a" style="left:293px;top:694.5px;width:2px;height:7.5px;background:#fff;border-radius:1px"></div>
<div class="a" style="left:293px;top:703.6px;width:2px;height:2px;background:#fff"></div>
<svg class="a" style="left:309px;top:697px" width="9" height="7" viewBox="0 0 9 7"><path d="M1.2 1.8L4.5 5L7.8 1.8" fill="none" stroke="#333" stroke-width="1.8"/></svg>
<!-- selection C2 -->
<div class="a" style="left:326px;top:687px;width:256px;height:29px;border:3px solid #3f8f2b"></div>
<div class="a" style="left:577px;top:711px;width:6px;height:6px;background:#3f8f2b;border:1px solid #fff"></div>
<!-- dropdown arrow button -->
<div class="a" style="left:582px;top:696px;width:16px;height:18px;background:#fff;border:1px solid #9aa0b0"></div>
<div class="a" style="left:586px;top:703px;width:0;height:0;border-left:4px solid transparent;border-right:4px solid transparent;border-top:5px solid #111"></div>
<!-- dropdown list -->
<div class="a" style="left:330px;top:717px;width:256px;height:215px;background:#fff;border-radius:6px;box-shadow:2px 3px 8px rgba(0,40,0,0.28)"></div>
<div class="t" style="left:340px;top:726px;font-size:17px;line-height:25px;color:#333">单选题</div>
<div class="t" style="left:340px;top:761px;font-size:17px;line-height:25px;color:#333">多选题</div>
<div class="t" style="left:340px;top:796px;font-size:17px;line-height:25px;color:#333">判断题</div>
<div class="t" style="left:340px;top:831px;font-size:17px;line-height:25px;color:#333">问答题</div>
<div class="t" style="left:340px;top:866px;font-size:17px;line-height:25px;color:#333">客观填空题</div>
<div class="t" style="left:340px;top:901px;font-size:17px;line-height:25px;color:#333">主观填空题</div>
<!-- red boxes -->
<div class="a" style="left:38px;top:304px;width:1545px;height:352px;border:4px solid #ff1c14;border-radius:4px"></div>
<div class="a" style="left:326px;top:687.5px;width:263px;height:246.5px;border:4px solid #ff1c14;border-radius:4px"></div>
<!-- arrows -->


<div class="a" style="left:0;top:958px;width:1656px;height:59px;background:linear-gradient(90deg,#e3e4e3 0%,#e4e5e3 50%,#e6e7dc 100%)"></div>
<div class="a" style="left:0;top:990px;width:1656px;height:1px;background:#d2d3d0"></div>
<svg class="a" style="left:18px;top:966px" width="14" height="14" viewBox="0 0 14 14"><path d="M1.5 1V13M12 1.5L6 7L12 12.5" fill="none" stroke="#a6a6a6" stroke-width="2.1"/></svg>
<svg class="a" style="left:46px;top:966px" width="10" height="14" viewBox="0 0 10 14"><path d="M8 1.5L2.5 7L8 12.5" fill="none" stroke="#a6a6a6" stroke-width="2.1"/></svg>
<svg class="a" style="left:75px;top:966px" width="10" height="14" viewBox="0 0 10 14"><path d="M2 1.5L7.5 7L2 12.5" fill="none" stroke="#a6a6a6" stroke-width="2.1"/></svg>
<svg class="a" style="left:99px;top:966px" width="14" height="14" viewBox="0 0 14 14"><path d="M12 1V13M1.5 1.5L7.5 7L1.5 12.5" fill="none" stroke="#a6a6a6" stroke-width="2.1"/></svg>
<div class="a" style="left:127px;top:958px;width:117px;height:30px;background:#fff;border-radius:0 0 7px 7px"></div>
<div class="t" style="left:141px;top:963px;font-size:15px;line-height:20px;color:#177a74;font-weight:bold">题目导入模板</div>
<svg class="a" style="left:252px;top:968px" width="14" height="14" viewBox="0 0 14 14"><path d="M7 0.5V13.5M0.5 7H13.5" stroke="#333" stroke-width="2.8"/></svg>
<div class="a" style="left:1131px;top:968px;width:1px;height:11px;background:#999"></div>
<div class="a" style="left:1150px;top:969px;width:0;height:0;border-top:4px solid transparent;border-bottom:4px solid transparent;border-right:6px solid #555"></div>
<div class="a" style="left:1168px;top:969px;width:520px;height:10px;background:#cbccc3;border-radius:5px"></div>
<!-- status bar -->
<div class="t" style="left:20px;top:996px;font-size:8.5px;line-height:9px;color:#444;font-weight:bold;letter-spacing:-0.3px">JSP</div><svg class="a" style="left:0;top:0;overflow:visible" width="1" height="1"><path d="M36.8 1002.5V1010.5Q36.8 1012.2 35 1012.2H24.5Q22.8 1012.2 22.8 1010.5V1008.2H30.5V1012" fill="none" stroke="#444" stroke-width="1.5"/></svg>
<div class="a" style="left:55px;top:997px;width:1px;height:17px;background:#c9c9c9"></div>
<svg class="a" style="left:0;top:0;overflow:visible" width="1" height="1"><path d="M88.6 1001V998.4H74.4V1012.1H79.6M82.1 1004.4H89.8M82.1 1008.1H89.8M82.1 1011.8H89.8" fill="none" stroke="#444" stroke-width="1.6"/></svg>
<div class="a" style="left:1327px;top:991px;width:30px;height:26px;background:#d5d6cf;border-radius:4px 4px 0 0"></div>
<svg class="a" style="left:1331px;top:997px" width="22" height="15" viewBox="0 0 22 15"><path d="M1.5 7.5Q6 1.5 11 1.5Q16 1.5 20.5 7.5Q16 13.5 11 13.5Q6 13.5 1.5 7.5Z" fill="none" stroke="#444" stroke-width="1.5"/><circle cx="11" cy="7.5" r="2.6" fill="none" stroke="#444" stroke-width="1.5"/></svg>
<svg class="a" style="left:1375px;top:996px" width="19" height="18" viewBox="0 0 19 18"><rect x="6.5" y="6" width="6" height="6" fill="none" stroke="#444" stroke-width="1.4"/><path d="M7 3Q9.5 0.5 12 3 M16 6.5Q18.5 9 16 11.5 M12 15Q9.5 17.5 7 15 M3 11.5Q0.5 9 3 6.5 M9.5 1V6M9.5 12V17M1 9H6.5M12.5 9H18" fill="none" stroke="#444" stroke-width="1.3"/></svg>
<svg class="a" style="left:1399px;top:1002px" width="9" height="6" viewBox="0 0 9 6"><path d="M1 1L4.5 4.5L8 1" fill="none" stroke="#444" stroke-width="1.4"/></svg>
<div class="a" style="left:1425px;top:997px;width:1px;height:17px;background:#c9c9c9"></div>
<div class="a" style="left:1436px;top:991px;width:30px;height:26px;background:#d5d6cf;border-radius:4px 4px 0 0"></div>
<svg class="a" style="left:1443px;top:996px" width="18" height="18" viewBox="0 0 18 18"><rect x="1.5" y="1.5" width="15" height="15" rx="1" fill="none" stroke="#444" stroke-width="1.5"/><path d="M1.5 6H16.5M6 6V16.5" stroke="#444" stroke-width="1.5"/></svg>
<svg class="a" style="left:1482px;top:996px" width="18" height="18" viewBox="0 0 18 18"><rect x="1.5" y="1.5" width="15" height="15" rx="1" fill="none" stroke="#444" stroke-width="1.5"/><path d="M9 1.5V16.5" stroke="#444" stroke-width="1.5"/></svg>
<svg class="a" style="left:1522px;top:996px" width="19" height="18" viewBox="0 0 19 18"><path d="M1.5 4H14V13.5H1.5Z M4 1.5H17.5V11" fill="none" stroke="#444" stroke-width="1.5"/><path d="M1.5 16H15" stroke="#444" stroke-width="1.5"/></svg>
<div class="a" style="left:1557px;top:997px;width:1px;height:17px;background:#c9c9c9"></div>
<div class="t" style="left:1577px;top:996px;font-size:15px;line-height:19px;color:#333">100%</div>
<svg class="a" style="left:1630px;top:1002px" width="9" height="6" viewBox="0 0 9 6"><path d="M1 1L4.5 4.5L8 1" fill="none" stroke="#444" stroke-width="1.4"/></svg>

<svg class="a" style="left:0;top:0" width="1656" height="1017" viewBox="0 0 1656 1017">
<path d="M241.07 30.52 L120.77 304.35 L123.70 308.20 L114.10 314.70 L112.00 297.90 L114.93 301.75 L240.53 30.28 Z" fill="#ff1c14"/>
<path d="M233.86 964.24 L324.43 912.20 L322.00 907.70 L338.20 908.20 L330.00 922.50 L327.57 918.00 L234.14 964.76 Z" fill="#ff1c14"/>
</svg>
</body></html>
